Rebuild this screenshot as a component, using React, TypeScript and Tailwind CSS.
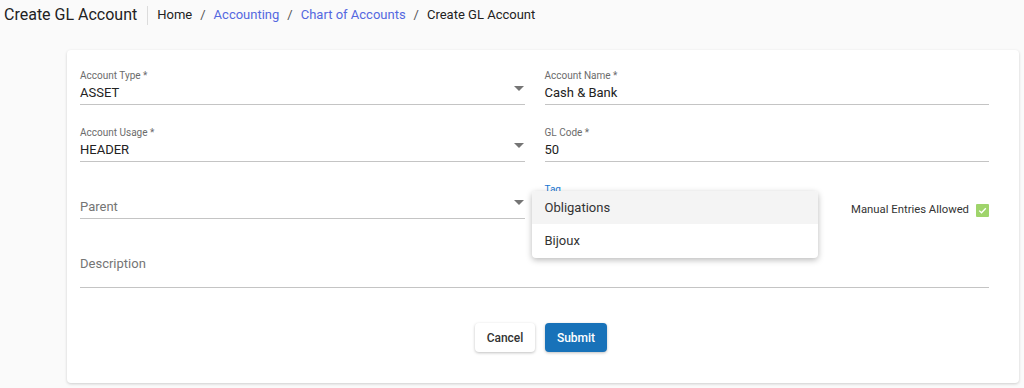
import React from "react";

function Caret() {
  return (
    <svg width="10" height="5" viewBox="0 0 10 5" className="shrink-0">
      <path d="M0 0 L10 0 L5 5 Z" fill="#757575" />
    </svg>
  );
}

function Field({
  label,
  value,
  select,
  placeholder,
}: {
  label?: string;
  value?: string;
  select?: boolean;
  placeholder?: string;
}) {
  return (
    <div className="flex flex-col border-b border-[#c4c4c4] pb-[2px]">
      <div className="h-[12px] text-[10px] leading-[12px] text-[#6b6b6b]">{label ?? ""}</div>
      <div className="mt-[2px] flex h-[18px] items-center justify-between">
        {value ? (
          <span className="text-[13px] leading-[18px] text-[#222]">{value}</span>
        ) : (
          <span className="text-[13px] leading-[18px] text-[#757575]">{placeholder}</span>
        )}
        {select && (
          <span className="mr-[1px] -mt-[10px]">
            <Caret />
          </span>
        )}
      </div>
    </div>
  );
}

export default function App() {
  return (
    <div
      className="min-h-[388px] w-[1024px] bg-[#fafafa] pb-[5px]"
      style={{ fontFamily: "Roboto, 'Noto Sans', sans-serif" }}
    >
      <div className="flex h-[30px] items-center pl-[4px]">
        <span className="text-[16px] leading-[20px] text-[#222]">Create GL Account</span>
        <span className="ml-[10px] h-[19px] w-px bg-[#dcdcdc]" />
        <nav className="ml-[9px] flex items-center gap-[8px] text-[13px] leading-[18px]">
          <span className="text-[#222]">Home</span>
          <span className="text-[#555]">/</span>
          <span className="text-[#5468e0]">Accounting</span>
          <span className="text-[#555]">/</span>
          <span className="text-[#5468e0]">Chart of Accounts</span>
          <span className="text-[#555]">/</span>
          <span className="text-[#222]">Create GL Account</span>
        </nav>
      </div>

      <div className="ml-[67px] mt-[20px] w-[952px] rounded-[4px] bg-white pb-[31px] pl-[13px] pr-[30px] pt-[20px] shadow-[0_1px_3px_rgba(0,0,0,0.18)]">
        <div className="grid grid-cols-2 gap-x-[20px] gap-y-[22px]">
          <Field label="Account Type *" value="ASSET" select />
          <Field label="Account Name *" value="Cash & Bank" />
          <Field label="Account Usage *" value="HEADER" select />
          <Field label="GL Code *" value="50" />
          <Field placeholder="Parent" select />
          <div className="relative flex items-start">
            <div className="w-[256px]">
              <div className="flex flex-col pb-[2px]">
                <div className="h-[12px] text-[10px] leading-[12px] text-[#1976d2]">Tag</div>
                <div className="mt-[2px] h-[18px]" />
              </div>
            </div>
            <div className="ml-auto mt-[18px] flex items-center gap-[7px]">
              <span className="text-[11.3px] leading-[16px] text-[#333]">Manual Entries Allowed</span>
              <span className="flex h-[13px] w-[13px] items-center justify-center rounded-[1px] bg-[#9fd46b]">
                <svg width="9" height="9" viewBox="0 0 9 9">
                  <path d="M1.2 4.6 L3.5 6.8 L7.8 2.2" stroke="white" strokeWidth="1.3" fill="none" />
                </svg>
              </span>
            </div>
            <div className="absolute left-[-13px] top-[7px] z-10 w-[286px] overflow-hidden rounded-[4px] bg-white py-0 shadow-[0_2px_6px_rgba(0,0,0,0.28)]">
              <div className="flex h-[33px] items-center bg-[#f4f4f4] px-[13px] text-[13px] text-[#333]">
                Obligations
              </div>
              <div className="flex h-[34px] items-center px-[13px] text-[13px] text-[#333]">Bijoux</div>
            </div>
          </div>
          <div className="col-span-2 flex flex-col border-b border-[#c4c4c4] pb-[2px]">
            <div className="h-[12px]" />
            <div className="mt-[2px] h-[30px] text-[13px] leading-[18px] text-[#757575]">Description</div>
          </div>
        </div>

        <div className="mt-[35px] flex justify-center gap-[10px] pl-[13px]">
          <button className="h-[29px] w-[60px] rounded-[4px] bg-white text-[12px] font-medium text-[#333] shadow-[0_1px_3px_rgba(0,0,0,0.25)]">
            Cancel
          </button>
          <button className="h-[29px] w-[62px] rounded-[4px] bg-[#1872b9] text-[12px] font-medium text-white shadow-[0_1px_3px_rgba(0,0,0,0.25)]">
            Submit
          </button>
        </div>
      </div>
    </div>
  );
}
